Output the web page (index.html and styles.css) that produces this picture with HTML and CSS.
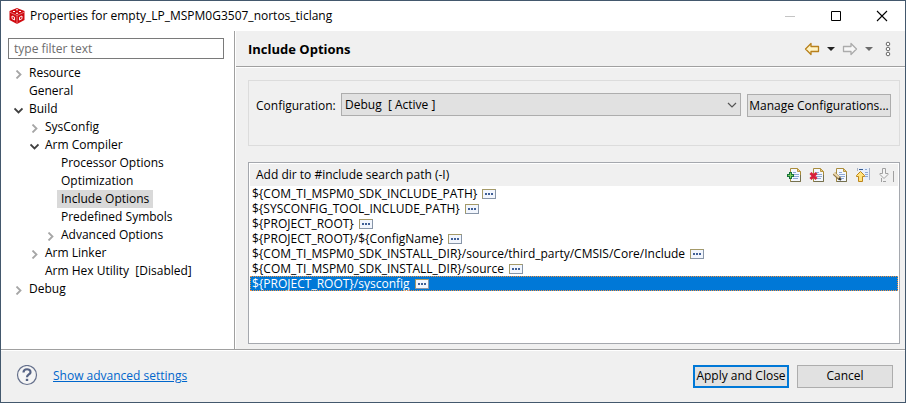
FILE: index.html
```html
<!DOCTYPE html>
<html lang="en">
<head>
<meta charset="utf-8">
<title>Properties for empty_LP_MSPM0G3507_nortos_ticlang</title>
<link rel="stylesheet" href="styles.css">
</head>
<body>
<svg class="defs" aria-hidden="true">
  <defs>
    <symbol id="closed" viewBox="0 0 9 9"><path d="M2.500 0.500L6.500 4.500L2.500 8.500" fill="none" stroke="#a6a6a6" stroke-width="1.800"/></symbol>
    <symbol id="open" viewBox="0 0 9 9"><path d="M0.500 2.500L4.500 6.500L8.500 2.500" fill="none" stroke="#404040" stroke-width="1.800"/></symbol>
    <symbol id="page" viewBox="0 0 15 15">
      <path d="M3.500 1.500H10.500L13.500 4.500V14.500H3.500Z" fill="#f4f8fe" stroke="#a98c3c"/>
      <path d="M3.500 14.500H13.500V8" fill="none" stroke="#75704f"/>
      <path d="M10.500 1.500V4.500H13.500Z" fill="#e8cf85" stroke="#b89742"/>
      <path d="M6 5.500H9M6 7.500H12M6 9.500H12M6 11.500H11" stroke="#8fa9d4"/>
    </symbol>
  </defs>
</svg>
<div class="window">
  <header class="titlebar">
    <svg class="logo" width="16" height="16" viewBox="0 0 16 16" aria-hidden="true">
      <path d="M8 0L15.500 3V12L8 16L0.500 12V3Z" fill="#d00a10"/>
      <path d="M0.500 4L8 7.500L15.500 4M8 7.500V16" fill="none" stroke="#f0a0a0" stroke-width="0.700"/>
      <path d="M4 3.500H6M10 3.500H12M7 1.800H9M7 5.300H9" stroke="#fff"/>
      <path d="M3 8L5.500 9.200V12L3 10.600ZM13 8L10.500 9.200V12L13 10.600Z" fill="none" stroke="#fff" stroke-width="0.900"/>
    </svg>
    <span class="title">Properties for empty_LP_MSPM0G3507_nortos_ticlang</span>
    <button class="caption" aria-label="Minimize"><svg width="12" height="12"><path d="M1 6.500H11" stroke="#c4c4c4"/></svg></button>
    <button class="caption" aria-label="Maximize"><svg width="12" height="12"><path d="M1.500 1.500H10.500V10.500H1.500Z" fill="none" stroke="#000"/></svg></button>
    <button class="caption" aria-label="Close"><svg width="12" height="12"><path d="M1 1L11 11M11 1L1 11" stroke="#000" stroke-width="1.100"/></svg></button>
  </header>
  <div class="main">
    <nav class="sidebar">
      <input class="filter" type="text" placeholder="type filter text" aria-label="type filter text">
      <ul class="tree">
        <li class="level1"><svg class="arrow"><use href="#closed"/></svg><span>Resource</span></li>
        <li class="level1"><i class="arrow"></i><span>General</span></li>
        <li class="level1"><svg class="arrow"><use href="#open"/></svg><span>Build</span></li>
        <li class="level2"><svg class="arrow"><use href="#closed"/></svg><span>SysConfig</span></li>
        <li class="level2"><svg class="arrow"><use href="#open"/></svg><span>Arm Compiler</span></li>
        <li class="level3"><i class="arrow"></i><span>Processor Options</span></li>
        <li class="level3"><i class="arrow"></i><span>Optimization</span></li>
        <li class="level3"><i class="arrow"></i><span class="current">Include Options</span></li>
        <li class="level3"><i class="arrow"></i><span>Predefined Symbols</span></li>
        <li class="level3"><svg class="arrow"><use href="#closed"/></svg><span>Advanced Options</span></li>
        <li class="level2"><svg class="arrow"><use href="#closed"/></svg><span>Arm Linker</span></li>
        <li class="level2"><i class="arrow"></i><span>Arm Hex Utility&nbsp; [Disabled]</span></li>
        <li class="level1"><svg class="arrow"><use href="#closed"/></svg><span>Debug</span></li>
      </ul>
    </nav>
    <main class="content">
      <div class="heading">
        <h1>Include Options</h1>
        <button class="tool" aria-label="Back"><svg width="16" height="14" viewBox="0 0 16 14"><path d="M1.500 7L7 1.500V4.500H14.500V9.500H7V12.500Z" fill="#fff3c4" stroke="#b8801c" stroke-width="1.300" stroke-linejoin="round"/></svg></button>
        <button class="tool" aria-label="Back history"><svg width="8" height="14"><path d="M0 5H8L4 9Z" fill="#222"/></svg></button>
        <button class="tool" aria-label="Forward"><svg width="16" height="14" viewBox="0 0 16 14"><path d="M14.500 7L9 1.500V4.500H1.500V9.500H9V12.500Z" fill="#f7f7f7" stroke="#ababab" stroke-width="1.300" stroke-linejoin="round"/></svg></button>
        <button class="tool" aria-label="Forward history"><svg width="8" height="14"><path d="M0 5H8L4 9Z" fill="#6c6c6c"/></svg></button>
        <button class="tool" aria-label="View menu"><svg width="16" height="16"><g fill="#fff" stroke="#666"><circle cx="8" cy="3" r="1.800"/><circle cx="8" cy="8" r="1.800"/><circle cx="8" cy="13" r="1.800"/></g></svg></button>
      </div>
      <div class="body">
        <div class="config">
          <label for="configuration">Configuration:</label>
          <span class="combo">
            <select id="configuration"><option>Debug&nbsp; [ Active ]</option></select>
            <svg class="chevron" width="10" height="6" aria-hidden="true"><path d="M1 1L5 5L9 1" fill="none" stroke="#555" stroke-width="1.200"/></svg>
          </span>
          <button class="button manage">Manage Configurations...</button>
        </div>
        <section class="paths">
          <div class="pathbar">
            <h2>Add dir to #include search path (-I)</h2>
            <button class="tool" aria-label="Add"><svg width="16" height="16" viewBox="0 0 16 16"><use href="#page" x="1" width="15" height="15"/><path d="M3 5H6V7H8V10H6V12H3V10H1V7H3Z" fill="#17733a"/><path d="M4.500 6V11M2 8.500H7" stroke="#7fd05c"/></svg></button>
            <button class="tool" aria-label="Delete"><svg width="16" height="16" viewBox="0 0 16 16"><use href="#page" x="1" width="15" height="15"/><path d="M1.500 6L7.500 12M7.500 6L1.500 12" stroke="#d8203c" stroke-width="3"/></svg></button>
            <button class="tool" aria-label="Edit"><svg width="16" height="16" viewBox="0 0 16 16"><use href="#page" x="1" width="15" height="15"/><path d="M2 6.500L8 12" stroke="#8d7548" stroke-width="3.500"/><path d="M2 6L7 10.500" stroke="#edd9ac" stroke-width="2"/><path d="M7 11.500L9 13" stroke="#333" stroke-width="2"/></svg></button>
            <button class="tool" aria-label="Move up"><svg width="16" height="16" viewBox="0 0 16 16"><path d="M4 1H15V13H10V6H4Z" fill="#e7effb"/><path d="M14.500 1V13M2.500 1V4" stroke="#a7b1c4"/><path d="M4 2.500H8" stroke="#365b92"/><path d="M10 5.500H13M10 7.500H13M10 9.500H13M10 2.500H12" stroke="#8fa9d4"/><path d="M1.500 8.500L5.500 4.500L9.500 8.500V9.500H7.500V14.500H3.500V9.500H1.500Z" fill="#ffe27e" stroke="#bd8519"/></svg></button>
            <button class="tool" aria-label="Move down"><svg width="16" height="16" viewBox="0 0 16 16"><path d="M4.500 1.500H7.500V6.500H10V7.500L6 11.500L2 7.500V6.500H4.500Z" fill="#f4f4f4" stroke="#a0a0a0"/><path d="M3.500 11V15M5 14.500H8M15.500 4V15" stroke="#a0a0a0"/></svg></button>
          </div>
          <ul class="pathlist">
            <li><span>${COM_TI_MSPM0_SDK_INCLUDE_PATH}</span><button class="more" aria-label="Edit path"></button></li>
            <li><span>${SYSCONFIG_TOOL_INCLUDE_PATH}</span><button class="more" aria-label="Edit path"></button></li>
            <li><span>${PROJECT_ROOT}</span><button class="more" aria-label="Edit path"></button></li>
            <li><span>${PROJECT_ROOT}/${ConfigName}</span><button class="more" aria-label="Edit path"></button></li>
            <li><span>${COM_TI_MSPM0_SDK_INSTALL_DIR}/source/third_party/CMSIS/Core/Include</span><button class="more" aria-label="Edit path"></button></li>
            <li><span>${COM_TI_MSPM0_SDK_INSTALL_DIR}/source</span><button class="more" aria-label="Edit path"></button></li>
            <li class="selected"><span>${PROJECT_ROOT}/sysconfig</span><button class="more" aria-label="Edit path"></button></li>
          </ul>
        </section>
      </div>
    </main>
  </div>
  <footer class="footer">
    <button class="tool" aria-label="Help"><svg width="22" height="22" viewBox="0 0 22 22"><circle cx="11" cy="10" r="9.500" fill="#f5f5f5" stroke="#65708c" stroke-width="1.200"/><path d="M7.500 7.500C7.500 3.200 14.500 3.200 14.500 7.200C14.500 9.500 11 9.500 11 12.200" fill="none" stroke="#566384" stroke-width="2.200"/><path d="M9.800 13.800H12.200V16H9.800Z" fill="#566384"/></svg></button>
    <a href="#advanced">Show advanced settings</a>
    <button class="button primary">Apply and Close</button>
    <button class="button">Cancel</button>
  </footer>
</div>
</body>
</html>
```
FILE: styles.css
```css
* { box-sizing: border-box; }
body {
  margin: 0;
  font: 12px/18px "Open Sans", "Noto Sans", sans-serif;
  color: #000;
}
button, input, select { font: inherit; color: inherit; }
ul { list-style: none; margin: 0; padding: 0; }
h1, h2 { margin: 0; font-size: inherit; flex: 1; }
svg { display: block; }
.defs { position: absolute; width: 0; height: 0; }
.window {
  min-height: 100vh;
  display: flex;
  flex-direction: column;
  background: #f0f0f0;
  border: 1px solid #43586d;
}
.titlebar {
  display: flex;
  align-items: center;
  height: 30px;
  padding-left: 8px;
  background: #fff;
}
.title { flex: 1; padding-left: 5px; }
.caption {
  width: 46px;
  height: 30px;
  padding: 0;
  border: 0;
  background: none;
  display: grid;
  place-items: center;
}
.main { display: flex; flex: 1; }
.sidebar {
  width: 234px;
  flex: none;
  padding: 7px;
  background: #fff;
  border-right: 1px solid #a0a0a0;
}
.filter {
  display: block;
  width: 216px;
  height: 21px;
  padding: 0 5px;
  border: 1px solid #7a7a7a;
  background: #fff;
}
.filter::placeholder { color: #6d6d6d; opacity: 1; }
.tree { padding-top: 5px; }
.tree li { display: flex; align-items: center; height: 18px; white-space: nowrap; }
.tree span { padding: 0 4px; }
.tree .current { background: #d9d9d9; }
.arrow { width: 9px; height: 9px; margin: 2px 2px 0 0; flex: none; }
.level1 { padding-left: 6px; }
.level2 { padding-left: 22px; }
.level3 { padding-left: 38px; }
.content {
  flex: 1;
  min-width: 0;
  display: flex;
  flex-direction: column;
  border-left: 1px solid #fff;
}
.heading {
  display: flex;
  align-items: center;
  gap: 7px;
  height: 36px;
  padding: 0 9px 0 12px;
  border-bottom: 1px solid #a0a0a0;
  box-shadow: 0 1px #fff;
}
.heading h1 { font-size: 13px; }
.tool { padding: 0; border: 0; background: none; }
.body {
  flex: 1;
  display: flex;
  flex-direction: column;
  gap: 16px;
  padding: 13px 5px 5px 12px;
}
.config {
  display: flex;
  align-items: flex-start;
  height: 66px;
  padding: 12px 8px 0 7px;
  border: 1px solid #dcdcdc;
}
.config label { width: 85px; line-height: 26px; }
.combo { flex: 1; position: relative; }
.combo select {
  display: block;
  width: 100%;
  height: 23px;
  padding: 0 3px;
  appearance: none;
  border: 1px solid #adadad;
  border-radius: 0;
  background: #e1e1e1;
}
.chevron { position: absolute; right: 4px; top: 9px; pointer-events: none; }
.button {
  width: 96px;
  height: 23px;
  padding: 0;
  line-height: 16px;
  white-space: nowrap;
  border: 1px solid #adadad;
  background: #e1e1e1;
}
.manage { width: 144px; margin: 1px 0 0 6px; }
.primary { border: 2px solid #0078d7; }
.paths {
  flex: 1;
  padding: 1px;
  background: #fff;
  border: 1px solid #a5a8ae;
}
.pathbar {
  display: flex;
  align-items: center;
  gap: 7px;
  height: 22px;
  padding: 0 4px 0 6px;
  background: #f0f0f0;
}
.pathbar h2 { font-weight: normal; }
.pathlist li {
  display: flex;
  align-items: center;
  gap: 5px;
  height: 15px;
  padding: 0 2px;
  line-height: 15px;
  white-space: nowrap;
}
.pathlist .selected { background: #0078d7; color: #fff; outline: 1px dotted #f09040; outline-offset: -1px; }
.more {
  width: 14px;
  height: 10px;
  padding: 0;
  border: 1px solid #8795a8;
  border-top-color: #a59a68;
  border-left-color: #a59a68;
  background: #f2f6fd;
  display: grid;
  place-items: center;
}
.more::before { content: ""; width: 8px; height: 2px; background: repeating-linear-gradient(90deg, #3f5f96 0 2px, transparent 2px 3px); }
.footer {
  display: flex;
  align-items: center;
  gap: 8px;
  height: 53px;
  padding: 0 12px 0 15px;
  border-top: 1px solid #a0a0a0;
  box-shadow: inset 0 1px #fff;
}
.footer a { flex: 1; padding-left: 7px; color: #0066cc; }
```
